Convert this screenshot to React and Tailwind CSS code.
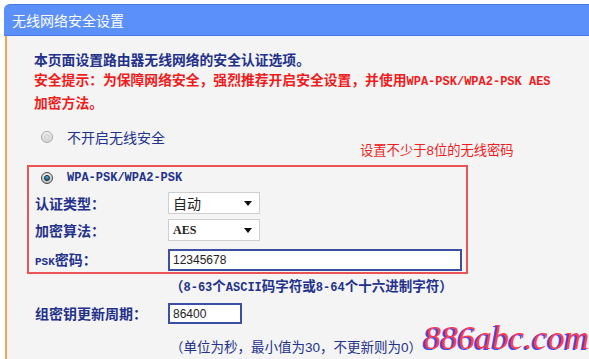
import React from "react";

const CJK = { fontFamily: '"Noto Sans CJK SC", "Noto Sans", sans-serif' };
const MONO = { fontFamily: '"Liberation Mono", "Noto Sans CJK SC", monospace' };
const SANS = { fontFamily: '"Liberation Sans", sans-serif' };

function Radio({ checked }) {
  return (
    <span
      className={
        "inline-flex items-center justify-center w-[12px] h-[12px] rounded-full border shrink-0 " +
        (checked
          ? "border-[#444] bg-gradient-to-b from-[#e8e8e8] to-[#bdbdbd]"
          : "border-[#a8a8a8] bg-gradient-to-b from-[#f2f2f2] to-[#d4d4d4]")
      }
    >
      {checked ? (
        <span className="w-[6px] h-[6px] rounded-full bg-gradient-to-b from-[#58c0e8] to-[#0f5f8a] border border-[#123]" />
      ) : (
        <span className="w-[6px] h-[6px] rounded-full bg-[#e2e2e2] border border-[#cfcfcf]" />
      )}
    </span>
  );
}

function Select({ value, mono }) {
  return (
    <div className="w-[92px] h-[22px] bg-white border border-[#cfcfcf] flex items-center justify-between pl-[4px] pr-[7px]">
      <span
        className={mono ? "text-[12px] font-bold text-[#222]" : "text-[14px] text-[#222]"}
        style={mono ? { fontFamily: '"Liberation Serif", serif' } : CJK}
      >
        {value}
      </span>
      <span className="w-0 h-0 border-l-[4px] border-r-[4px] border-t-[5px] border-l-transparent border-r-transparent border-t-[#111]" />
    </div>
  );
}

export default function App() {
  return (
    <div className="w-[589px] h-[359px] bg-white pt-[4px] pl-[4px] overflow-hidden" style={CJK}>
      <div className="h-[32px] bg-[#5b8ff9] rounded-tl-[6px] border-t border-b border-[#4a78e6] flex items-center pl-[8px]">
        <span className="text-white text-[14px] leading-none">无线网络安全设置</span>
      </div>
      <div className="relative h-[323px] ml-[1px] border-l-2 border-[#f6a25c] bg-[#f4f4f5]">
        <div className="pt-[13px] pl-[27px] text-[13.8px] leading-[20px] font-bold">
          <div className="text-[#23318a]">本页面设置路由器无线网络的安全认证选项。</div>
          <div className="text-[#f01c1c]">
            安全提示：为保障网络安全，强烈推荐开启安全设置，并使用
            <span className="text-[12px]" style={MONO}>WPA-PSK/WPA2-PSK AES</span>
          </div>
          <div className="text-[#f01c1c]">加密方法。</div>
        </div>

        <div className="mt-[15px] h-[20px] pl-[34px] flex items-center gap-[14px]">
          <Radio />
          <span className="text-[14px] text-[#23318a]">不开启无线安全</span>
        </div>

        <div className="mt-[18px] ml-[20px] w-[441px] h-[109px] border-2 border-[#ec5454] flex flex-col">
          <div className="h-[20px] mt-[1px] pl-[12px] flex items-center gap-[14px]">
            <Radio checked />
            <span className="text-[12px] font-bold text-[#23318a]" style={MONO}>WPA-PSK/WPA2-PSK</span>
          </div>
          <div className="mt-[4px] h-[22px] pl-[6px] flex items-center">
            <span className="w-[133px] text-[14px] font-bold text-[#23318a]">认证类型：</span>
            <Select value="自动" />
          </div>
          <div className="mt-[5px] h-[22px] pl-[6px] flex items-center">
            <span className="w-[133px] text-[14px] font-bold text-[#23318a]">加密算法：</span>
            <Select value="AES" mono />
          </div>
          <div className="mt-[8px] h-[22px] pl-[6px] flex items-center">
            <span className="w-[133px] text-[14px] font-bold text-[#23318a]">
              <span className="text-[11px]" style={MONO}>PSK</span>密码：
            </span>
            <div className="w-[294px] h-[22px] bg-white border-2 border-[#3c4fa3] flex items-center pl-[3px]">
              <span className="text-[12px] text-[#222]" style={SANS}>12345678</span>
            </div>
          </div>
        </div>

        <div className="h-[20px] mt-[1px] pl-[163px] leading-[20px] text-[13.5px] font-bold text-[#23318a] whitespace-nowrap">
          （<span className="text-[12px]" style={MONO}>8-63</span>个<span className="text-[12px]" style={MONO}>ASCII</span>码字符或<span className="text-[12px]" style={MONO}>8-64</span>个十六进制字符）
        </div>

        <div className="mt-[8px] h-[21px] pl-[28px] flex items-center">
          <span className="w-[133px] text-[14px] font-bold text-[#23318a]">组密钥更新周期：</span>
          <div className="w-[74px] h-[21px] bg-white border-2 border-[#3c4fa3] flex items-center pl-[3px]">
            <span className="text-[12px] text-[#222]" style={SANS}>86400</span>
          </div>
        </div>

        <div className="mt-[12px] h-[20px] pl-[163px] leading-[20px] text-[13.5px] text-[#23318a] whitespace-nowrap">
          （单位为秒，最小值为<span style={SANS}>30</span>，不更新则为<span style={SANS}>0</span>）
        </div>

        <div className="absolute left-[353px] top-[104px] text-[13.3px] leading-[20px] text-[#f01c1c]">
          设置不少于<span style={SANS}>8</span>位的无线密码
        </div>

        <div
          className="absolute left-[417px] top-[285px] text-[34px] leading-none italic text-[#ff3b4e]"
          style={{ fontFamily: '"Liberation Serif", serif', textShadow: "-2px 1px 0 #3a4cff" }}
        >
          886abc.com
        </div>
      </div>
    </div>
  );
}
